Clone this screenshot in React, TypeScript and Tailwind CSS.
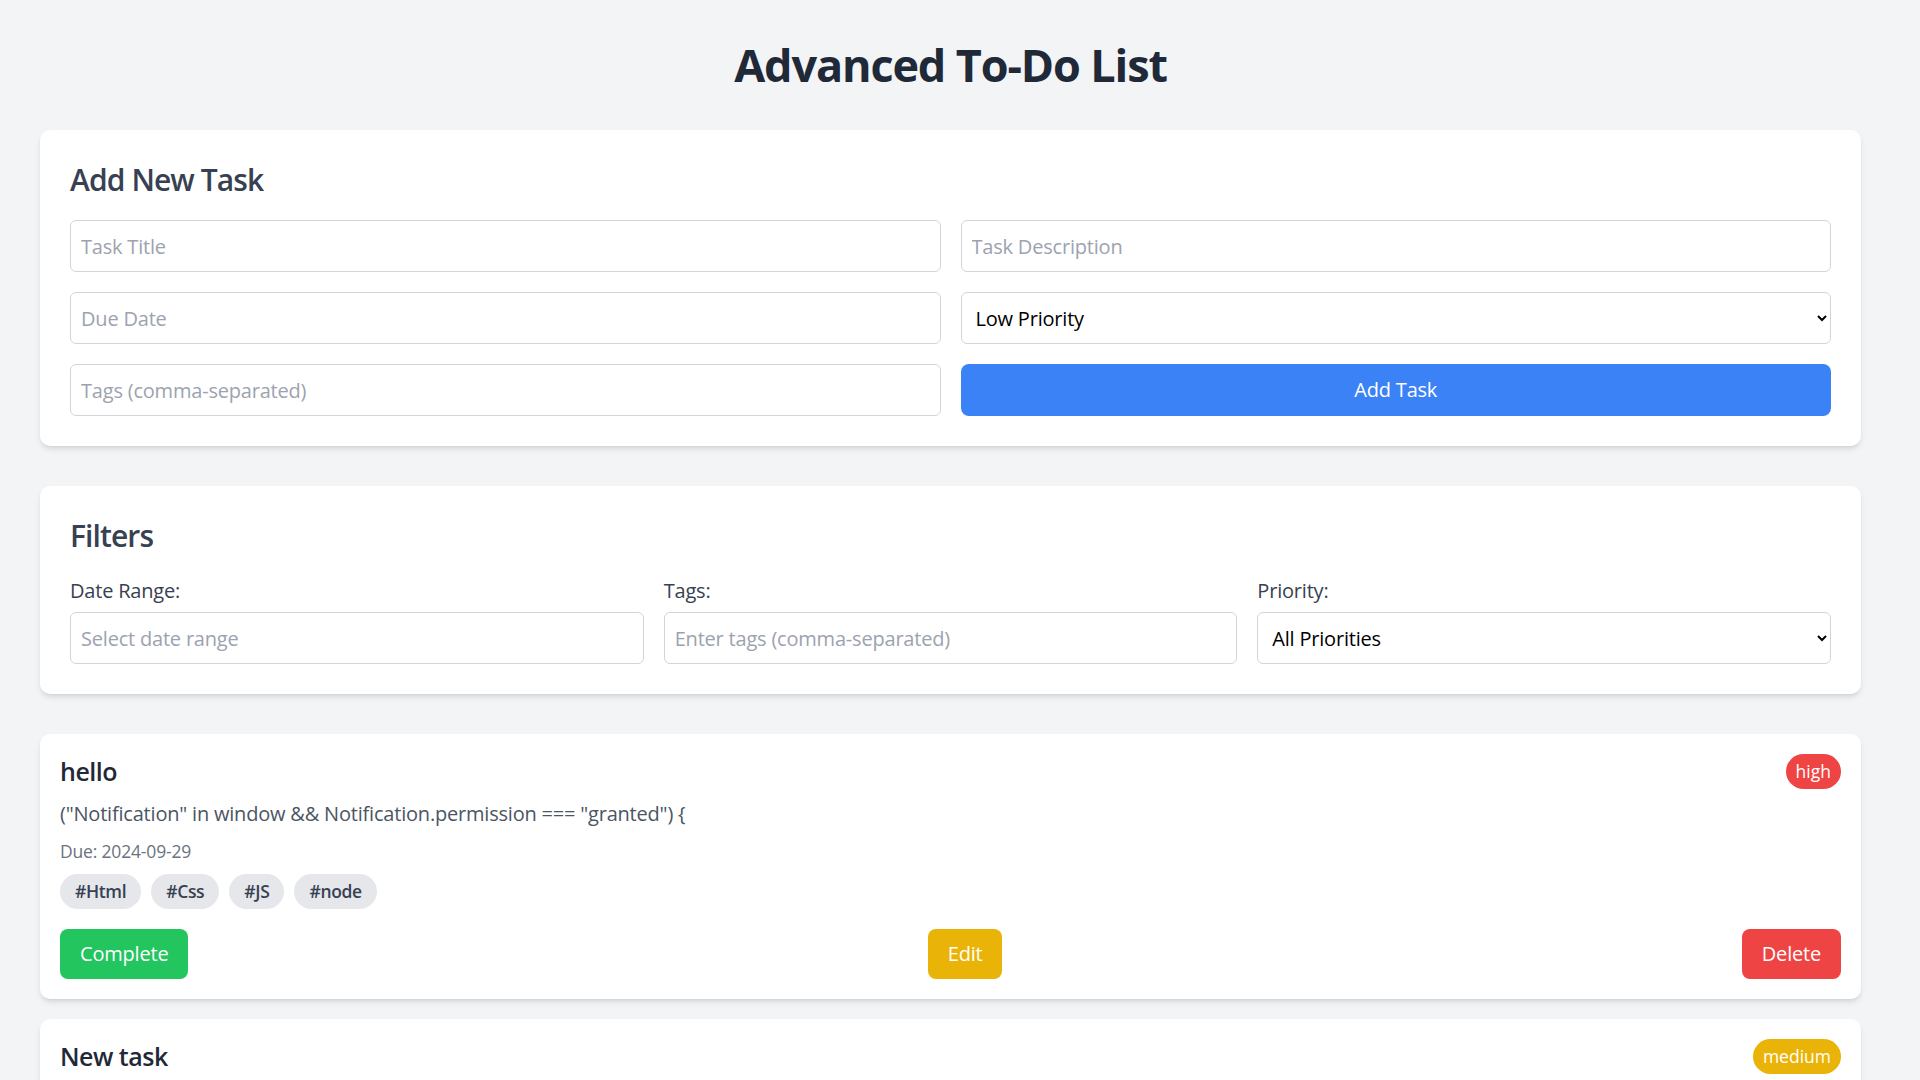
import { useState } from "react";

/* ─── Data ───────────────────────────────────────────────────────────────── */
type Priority = "low" | "medium" | "high";

type Task = {
  id: number;
  title: string;
  description: string;
  dueDate: string;
  priority: Priority;
  tags: string[];
};

const TASKS: Task[] = [
  {
    id: 1,
    title: "hello",
    description: '("Notification" in window && Notification.permission === "granted") {',
    dueDate: "2024-09-29",
    priority: "high",
    tags: ["Html", "Css", "JS", "node"],
  },
  {
    id: 2,
    title: "New task",
    description: "Finish the weekly report",
    dueDate: "2024-10-02",
    priority: "medium",
    tags: ["work"],
  },
  {
    id: 3,
    title: "Groceries",
    description: "Milk, bread, eggs",
    dueDate: "2024-10-05",
    priority: "low",
    tags: ["home"],
  },
];

const BADGE: Record<Priority, string> = {
  high: "bg-[#ef4444]",
  medium: "bg-[#eab308]",
  low: "bg-[#22c55e]",
};

/* ─── Shared classes ─────────────────────────────────────────────────────── */
const field =
  "h-[52px] w-full rounded-md border border-[#d1d5db] bg-white px-2.5 text-[20px] leading-[30px] tracking-[-0.01em] text-black outline-none placeholder:text-[#9ca3af]";

const card = "rounded-[10px] bg-white shadow-md";

const btn = "rounded-lg px-5 text-[20px] leading-[50px] tracking-[-0.01em] text-white";

/* ─── Task card ──────────────────────────────────────────────────────────── */
function TaskCard({ task }: { task: Task }) {
  return (
    <div className={`${card} p-5`}>
      <div className="mb-2.5 flex items-center justify-between">
        <h3 className="text-[25px] leading-[35px] font-semibold tracking-[-0.02em] text-[#1f2937]">
          {task.title}
        </h3>
        <span
          className={`rounded-full px-2.5 text-[17.5px] leading-[35px] text-white ${BADGE[task.priority]}`}
        >
          {task.priority}
        </span>
      </div>
      <p className="mb-2.5 text-[20px] leading-[30px] tracking-[-0.01em] text-[#4b5563]">
        {task.description}
      </p>
      <p className="mb-2.5 text-[17.5px] leading-[25px] tracking-[-0.01em] text-[#6b7280]">
        Due: {task.dueDate}
      </p>
      <div className="flex flex-wrap gap-2.5">
        {task.tags.map((tag) => (
          <span
            key={tag}
            className="rounded-full bg-[#e5e7eb] px-[15px] text-[17.5px] leading-[35px] font-semibold tracking-[-0.02em] text-[#374151]"
          >
            #{tag}
          </span>
        ))}
      </div>
      <div className="mt-5 flex items-center justify-between">
        <button className={`${btn} bg-[#22c55e]`}>Complete</button>
        <button className={`${btn} bg-[#eab308]`}>Edit</button>
        <button className={`${btn} bg-[#ef4444]`}>Delete</button>
      </div>
    </div>
  );
}

/* ─── Page ───────────────────────────────────────────────────────────────── */
export default function App() {
  const [priority, setPriority] = useState("low");
  const [filterPriority, setFilterPriority] = useState("all");

  return (
    <div className="min-h-screen bg-[#f3f4f6] pt-10 pb-10 pl-10 pr-[59px] font-['Open_Sans','Noto_Sans',sans-serif]">
      <h1 className="mb-10 text-center text-[45px] leading-[50px] font-bold tracking-[-0.025em] text-[#1f2937]">
        Advanced To-Do List
      </h1>

      {/* Add task form */}
      <div className={`${card} mb-10 p-[30px]`}>
        <h2 className="mb-5 text-[30px] leading-[40px] font-semibold tracking-[-0.03em] text-[#374151]">
          Add New Task
        </h2>
        <div className="grid grid-cols-2 gap-5">
          <input className={field} placeholder="Task Title" />
          <input className={field} placeholder="Task Description" />
          <input className={field} placeholder="Due Date" />
          <select
            className={`${field} pl-2.5`}
            value={priority}
            onChange={(e) => setPriority(e.target.value)}
          >
            <option value="low">Low Priority</option>
            <option value="medium">Medium Priority</option>
            <option value="high">High Priority</option>
          </select>
          <input className={field} placeholder="Tags (comma-separated)" />
          <button className="h-[52px] rounded-lg bg-[#3b82f6] text-[20px] tracking-[-0.01em] text-white">
            Add Task
          </button>
        </div>
      </div>

      {/* Filters */}
      <div className={`${card} mb-10 p-[30px]`}>
        <h2 className="mb-5 text-[30px] leading-[40px] font-semibold tracking-[-0.03em] text-[#374151]">
          Filters
        </h2>
        <div className="grid grid-cols-3 gap-5">
          <div>
            <label className="mb-1.5 block text-[20px] leading-[30px] tracking-[-0.01em] text-[#374151]">
              Date Range:
            </label>
            <input className={field} placeholder="Select date range" />
          </div>
          <div>
            <label className="mb-1.5 block text-[20px] leading-[30px] tracking-[-0.01em] text-[#374151]">
              Tags:
            </label>
            <input className={field} placeholder="Enter tags (comma-separated)" />
          </div>
          <div>
            <label className="mb-1.5 block text-[20px] leading-[30px] tracking-[-0.01em] text-[#374151]">
              Priority:
            </label>
            <select
              className={`${field} pl-2.5`}
              value={filterPriority}
              onChange={(e) => setFilterPriority(e.target.value)}
            >
              <option value="all">All Priorities</option>
              <option value="low">Low</option>
              <option value="medium">Medium</option>
              <option value="high">High</option>
            </select>
          </div>
        </div>
      </div>

      {/* Task list */}
      <div className="flex flex-col gap-5">
        {TASKS.map((task) => (
          <TaskCard key={task.id} task={task} />
        ))}
      </div>
    </div>
  );
}
